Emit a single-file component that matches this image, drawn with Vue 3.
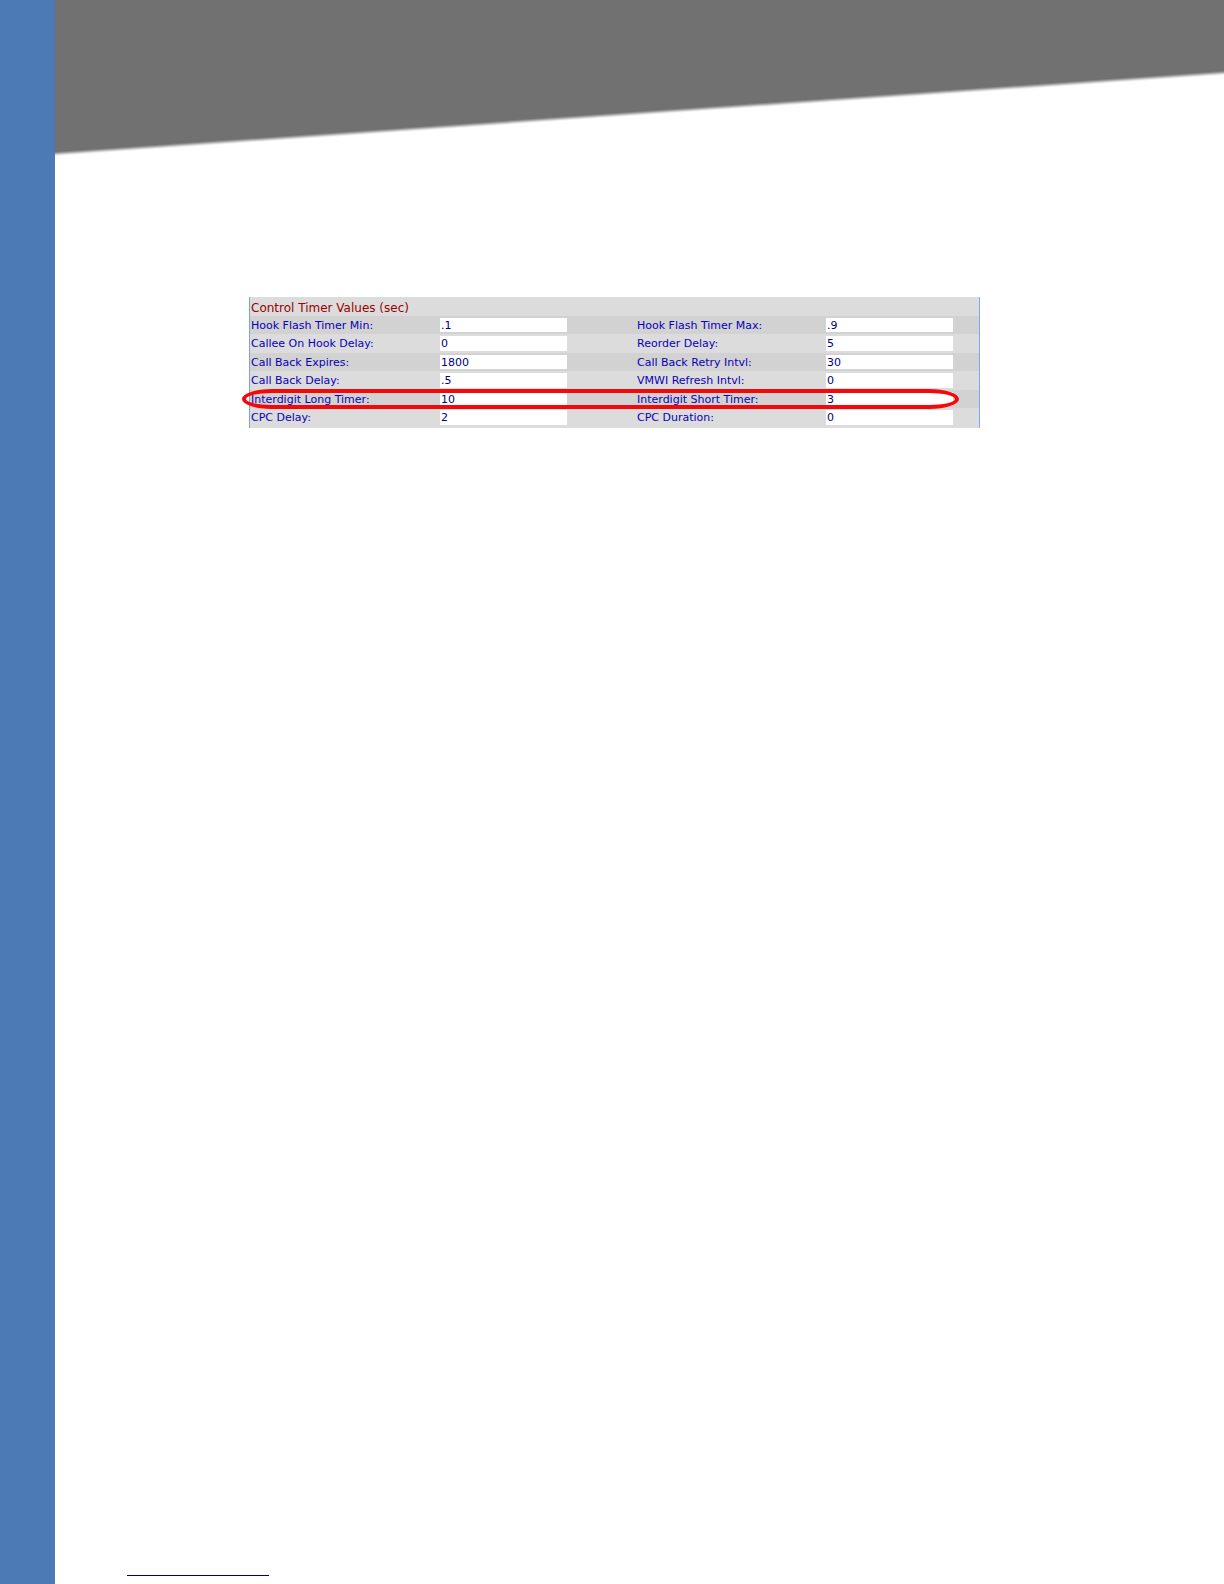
<template>
  <div class="page">
    <div class="side-band"></div>
    <div class="content">
      <header class="banner">
        <svg viewBox="0 0 1169 156" preserveAspectRatio="none" aria-hidden="true">
          <polygon points="0,0 1169,0 1169,75 0,156" fill="#f0f0f0" />
          <polygon points="0,0 1169,0 1169,74 0,155" fill="#d0d0d0" />
          <polygon points="0,0 1169,0 1169,73 0,154" fill="#aaaaaa" />
          <polygon points="0,0 1169,0 1169,72 0,153" fill="#888888" />
          <polygon points="0,0 1169,0 1169,71 0,152" fill="#717171" />
        </svg>
      </header>

      <main class="main">
        <form class="panel" @submit.prevent>
          <h2 class="panel-title">Control Timer Values (sec)</h2>
          <div
            v-for="row in rows"
            :key="row.id"
            class="row"
          >
            <template v-for="field in row.fields" :key="field.id">
              <label :for="field.id">{{ field.label }}</label>
              <input :id="field.id" v-model="field.value" type="text">
            </template>
            <span v-if="row.marked" class="marker"></span>
          </div>
        </form>
      </main>

      <footer class="footer">
        <hr class="footer-line">
      </footer>
    </div>
  </div>
</template>

<script setup>
import { ref } from 'vue';

// Each row holds a left and a right setting
const rows = ref([
  {
    id: 1,
    fields: [
      { id: 'hook-flash-min', label: 'Hook Flash Timer Min:', value: '.1' },
      { id: 'hook-flash-max', label: 'Hook Flash Timer Max:', value: '.9' }
    ]
  },
  {
    id: 2,
    fields: [
      { id: 'callee-on-hook-delay', label: 'Callee On Hook Delay:', value: '0' },
      { id: 'reorder-delay', label: 'Reorder Delay:', value: '5' }
    ]
  },
  {
    id: 3,
    fields: [
      { id: 'call-back-expires', label: 'Call Back Expires:', value: '1800' },
      { id: 'call-back-retry', label: 'Call Back Retry Intvl:', value: '30' }
    ]
  },
  {
    id: 4,
    fields: [
      { id: 'call-back-delay', label: 'Call Back Delay:', value: '.5' },
      { id: 'vmwi-refresh', label: 'VMWI Refresh Intvl:', value: '0' }
    ]
  },
  {
    id: 5,
    marked: true,
    fields: [
      { id: 'interdigit-long', label: 'Interdigit Long Timer:', value: '10' },
      { id: 'interdigit-short', label: 'Interdigit Short Timer:', value: '3' }
    ]
  },
  {
    id: 6,
    fields: [
      { id: 'cpc-delay', label: 'CPC Delay:', value: '2' },
      { id: 'cpc-duration', label: 'CPC Duration:', value: '0' }
    ]
  }
]);
</script>

<style>
body {
  margin: 0;
  background-color: #fff;
}
</style>

<style scoped>
.page {
  display: flex;
  min-height: 100vh;
  font-family: "DejaVu Sans", Verdana, sans-serif;
}

.side-band {
  flex: 0 0 55px;
  background-color: #4c7ab5;
}

.content {
  flex: 1;
  min-width: 0;
  display: flex;
  flex-direction: column;
}

.banner svg {
  display: block;
  width: 100%;
  height: 156px;
}

.main {
  flex: 1;
  padding: 141px 244px 0 194px;
}

.panel {
  padding-bottom: 1px;
  background-color: #dcdcdc;
  border-left: 1px solid #7da2d6;
  border-right: 1px solid #7da7f0;
}

.panel-title {
  margin: 0;
  padding: 3px 1px 0;
  color: #990000;
  font-size: 12px;
  font-weight: 400;
  line-height: 16px;
}

.row {
  position: relative;
  display: grid;
  grid-template-columns: 190fr 196fr 190fr 153fr;
  height: 19px;
  color: #0a00b8;
  font-size: 11px;
  line-height: 19px;
}

.row:nth-child(even) {
  height: 18px;
  background-color: #d2d2d2;
}

.row label {
  padding-left: 1px;
  white-space: nowrap;
}

.row input {
  box-sizing: border-box;
  width: 127px;
  height: 15px;
  margin: 2px 0 0;
  padding: 0 1px;
  border: none;
  border-radius: 0;
  background-color: #fff;
  color: #000080;
  font: inherit;
  line-height: 15px;
}

.row:nth-child(even) input {
  height: 14px;
}

/* Red ring drawn over the highlighted row */
.marker {
  position: absolute;
  top: -1px;
  right: 20px;
  bottom: -1px;
  left: -8px;
  border: 4px solid #f60808;
  border-radius: 30px / 10px;
  pointer-events: none;
}

.footer {
  padding: 0 72px 8px;
}

.footer-line {
  width: 142px;
  height: 1px;
  margin: 0;
  border: none;
  background-color: #000080;
}
</style>
